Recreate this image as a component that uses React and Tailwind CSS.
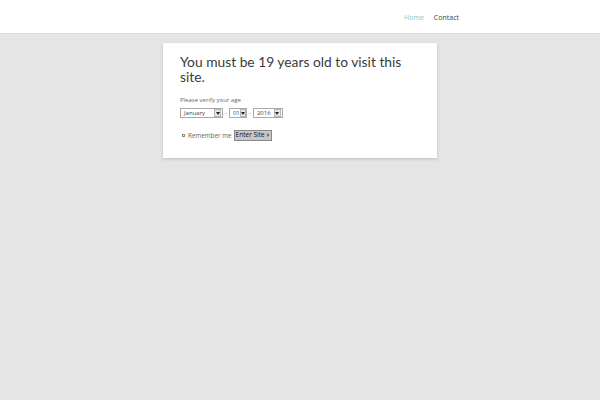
import React from "react";

function FakeSelect({ label, width }) {
  return (
    <div
      className="flex items-center h-[10px] border border-[#a9a9a9] bg-white"
      style={{ width }}
    >
      <span className="flex-1 pl-[3px] text-[6px] leading-none text-[#444]">{label}</span>
      <span className="w-[7px] h-[8px] mr-[1px] bg-[#e6e6e6] border border-[#b5b5b5] flex items-center justify-center">
        <svg width="4" height="3" viewBox="0 0 4 3"><path d="M0 0h4L2 3z" fill="#222" /></svg>
      </span>
    </div>
  );
}

export default function App() {
  return (
    <div className="w-[600px] h-[400px] bg-[#e5e5e5] flex flex-col" style={{ fontFamily: '"Open Sans", Lato, sans-serif' }}>
      <header className="h-[34px] bg-white border-b border-[#dcdcdc] flex items-center justify-end pr-[141px] pt-[3px] gap-[10px] text-[7px]">
        <span className="text-[#7ecac2]">Home</span>
        <span className="text-[#444]">Contact</span>
      </header>
      <div className="flex justify-center pt-[9px]">
        <div className="w-[274px] h-[115px] bg-white shadow-[0_1px_3px_rgba(0,0,0,0.18)] pl-[17px] pr-[16px] pt-[11px]">
          <h1 className="text-[13.8px] leading-[15px] text-[#3a3a3a]" style={{ fontFamily: 'Lato, "Open Sans", sans-serif' }}>
            You must be 19 years old to visit this site.
          </h1>
          <p className="mt-[13px] text-[6px] leading-none text-[#666]">Please verify your age</p>
          <div className="mt-[5px] flex items-center gap-[1px] text-[6px] text-[#555]">
            <FakeSelect label="January" width={43} />
            <span className="px-[1px]">-</span>
            <FakeSelect label="01" width={18} />
            <span className="px-[1px]">-</span>
            <FakeSelect label="2016" width={30} />
          </div>
          <div className="mt-[12px] flex items-center text-[6.3px] text-[#666]">
            <span className="ml-[2px] w-[3px] h-[3px] border border-[#888]" />
            <span className="ml-[3px]">Remember me</span>
            <span className="ml-[2px] w-[38px] h-[11px] bg-[#c8c8c8] border border-[#888] text-[#111] flex items-center justify-center text-[6.5px] leading-none">Enter Site »</span>
          </div>
        </div>
      </div>
    </div>
  );
}
